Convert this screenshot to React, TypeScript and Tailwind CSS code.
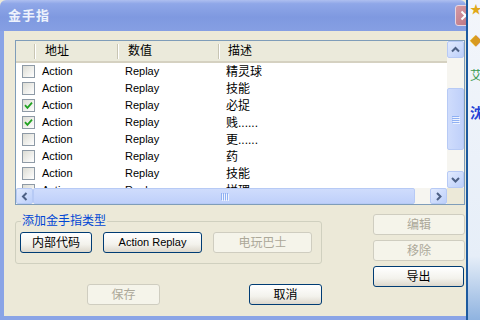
import clsx from "clsx";

type Row = { on: boolean; desc: string };

const rows: Row[] = [
  { on: false, desc: "精灵球" },
  { on: false, desc: "技能" },
  { on: true, desc: "必捉" },
  { on: true, desc: "贱......" },
  { on: false, desc: "更......" },
  { on: false, desc: "药" },
  { on: false, desc: "技能" },
  { on: false, desc: "拼理" },
];

function Check({ on }: { on: boolean }) {
  return (
    <span className="flex h-[13px] w-[13px] shrink-0 items-center justify-center border border-[#8e9aa6] bg-[linear-gradient(135deg,#dcdcd4,#ffffff)]">
      {on && (
        <svg width="9" height="9" viewBox="0 0 9 9">
          <path d="M1 4.2 L3.4 6.8 L8 1.6" fill="none" stroke="#21a121" strokeWidth="1.8" />
        </svg>
      )}
    </span>
  );
}

function XpButton({ label, disabled, className }: { label: string; disabled?: boolean; className?: string }) {
  return (
    <div
      className={clsx(
        "flex h-[21px] shrink-0 items-center justify-center rounded-[3px] border",
        disabled
          ? "border-[#cfcdc0] bg-[#f5f4ea] text-[#aca899]"
          : "border-[#003c74] bg-[linear-gradient(to_bottom,#ffffff,#f3f2ec_60%,#dcd7cc)] text-black",
        className,
      )}
    >
      {label}
    </div>
  );
}

/** XP Luna scroll arrow; dir picks the chevron. */
function Arrow({ dir, className }: { dir: "up" | "down" | "left" | "right"; className?: string }) {
  const d = {
    up: "M4 9.5 L7.5 6 L11 9.5",
    down: "M4 6 L7.5 9.5 L11 6",
    left: "M9.5 4 L6 7.5 L9.5 11",
    right: "M6 4 L9.5 7.5 L6 11",
  }[dir];
  return (
    <div
      className={clsx(
        "flex shrink-0 items-center justify-center rounded-[2px] border border-[#b7caf5] bg-[linear-gradient(135deg,#e2ebfe,#bccffa)]",
        className,
      )}
    >
      <svg width="15" height="15" viewBox="0 0 15 15">
        <path d={d} fill="none" stroke="#4d6185" strokeWidth="2" />
      </svg>
    </div>
  );
}

function Grip({ vertical }: { vertical?: boolean }) {
  return (
    <div className={clsx("flex gap-px", vertical ? "flex-col" : "flex-row")}>
      {[0, 1, 2, 3].map((i) => (
        <span
          key={i}
          className={clsx(
            vertical ? "h-px w-[7px]" : "h-[7px] w-px",
            "bg-[#8fb0f3] shadow-[1px_1px_0_#eef3fe]",
          )}
        />
      ))}
    </div>
  );
}

function HeadCell({ label, className, sep = true }: { label?: string; className?: string; sep?: boolean }) {
  return (
    <div className={clsx("flex h-full items-center justify-between", className)}>
      <span>{label}</span>
      {sep && <span className="h-[15px] w-px bg-[#c8c5b3] shadow-[1px_0_0_#ffffff]" />}
    </div>
  );
}

export default function App() {
  return (
    <div className="flex h-[320px] w-[480px] overflow-hidden bg-[#ece9d8] font-['Liberation_Sans','Noto_Sans_CJK_SC',sans-serif] text-[11px] text-black">
      {/* dialog, cut off on the right by another window */}
      <div className="flex h-full w-[466px] shrink-0 flex-col overflow-hidden">
        {/* title bar */}
        <div className="flex h-[31px] shrink-0 items-center rounded-t-[6px] bg-[linear-gradient(to_bottom,#aebff0_0%,#8fa7e8_12%,#7f99e0_55%,#869fe3_100%)] pl-[8px]">
          <span className="text-[13px] font-bold tracking-[1px] text-[#edf2fc]">金手指</span>
          <div className="ml-auto mr-[-10px] flex h-[21px] w-[21px] items-center justify-center rounded-[3px] border border-[#e8d6e0] bg-[linear-gradient(135deg,#d59aa4,#b8707e)]">
            <svg width="11" height="11" viewBox="0 0 11 11">
              <path d="M1.5 1.5 L9.5 9.5 M9.5 1.5 L1.5 9.5" stroke="#ffffff" strokeWidth="2" />
            </svg>
          </div>
        </div>

        {/* body */}
        <div className="flex flex-1 flex-col border-b-4 border-l-4 border-[#8aa4e6] pl-[11px] pt-[9px]">
          {/* list view */}
          <div className="flex h-[165px] w-[450px] shrink-0 flex-col border border-[#7f9db9] bg-white">
            <div className="flex h-[147px]">
              <div className="w-[431px] overflow-hidden">
                <div className="flex h-[22px] border-b-2 border-[#d5d1c1] bg-[#ebeadb] text-[12px]">
                  <HeadCell className="w-[19px]" />
                  <HeadCell label="地址" className="w-[83px] pl-[10px]" />
                  <HeadCell label="数值" className="w-[101px] pl-[10px]" />
                  <HeadCell label="描述" className="flex-1 pl-[9px]" sep={false} />
                </div>
                {rows.map((r, i) => (
                  <div key={i} className="flex h-[17px] items-center">
                    <div className="flex w-[102px] items-center pl-[6px]">
                      <Check on={r.on} />
                      <span className="ml-[7px]">Action</span>
                    </div>
                    <div className="w-[101px] pl-[7px]">Replay</div>
                    <div className="pl-[7px] text-[12px]">{r.desc}</div>
                  </div>
                ))}
              </div>
              {/* vertical scrollbar */}
              <div className="flex w-[17px] flex-col bg-[#f6f5f0]">
                <Arrow dir="up" className="h-[17px]" />
                <div className="h-[30px]" />
                <div className="flex h-[62px] items-center justify-center rounded-[2px] border border-[#b7caf5] bg-[linear-gradient(to_right,#cfdcfc,#bfd0fa)]">
                  <Grip vertical />
                </div>
                <div className="flex-1" />
                <Arrow dir="down" className="h-[17px]" />
              </div>
            </div>
            {/* horizontal scrollbar */}
            <div className="flex h-[16px]">
              <div className="flex w-[431px] bg-[#f6f5f0]">
                <Arrow dir="left" className="w-[17px]" />
                <div className="flex w-[382px] items-center justify-center rounded-[2px] border border-[#b7caf5] bg-[linear-gradient(to_bottom,#cfdcfc,#bfd0fa)]">
                  <Grip />
                </div>
                <div className="flex-1" />
                <Arrow dir="right" className="w-[17px]" />
              </div>
              <div className="w-[17px] bg-[#ece9d8]" />
            </div>
          </div>

          {/* lower controls */}
          <div className="flex text-[12px]">
            <div className="flex w-[307px] flex-col">
              <div className="mt-[16px] flex h-[43px] flex-col rounded-[3px] border border-[#d0d0bf]">
                <span className="ml-[5px] mt-[-8px] w-fit bg-[#ece9d8] px-px leading-[14px] text-[#0046d5]">添加金手指类型</span>
                <div className="mt-[4px] flex gap-[11px] pl-[4px]">
                  <XpButton label="内部代码" className="w-[72px]" />
                  <XpButton label="Action Replay" className="w-[99px] text-[11px]" />
                  <XpButton label="电玩巴士" disabled className="w-[99px]" />
                </div>
              </div>
              <div className="mt-[20px] flex">
                <XpButton label="保存" disabled className="ml-[72px] w-[73px]" />
                <XpButton label="取消" className="ml-[89px] w-[73px]" />
              </div>
            </div>
            <div className="ml-[51px] mt-[9px] flex flex-col gap-[5px]">
              <XpButton label="编辑" disabled className="w-[92px]" />
              <XpButton label="移除" disabled className="w-[92px]" />
              <XpButton label="导出" className="w-[91px]" />
            </div>
          </div>
        </div>
      </div>

      {/* window behind, peeking out on the right */}
      <div className="flex h-full w-[14px] shrink-0 flex-col overflow-hidden border-l-2 border-[#1d5a9e] bg-[linear-gradient(to_bottom,#f3f6fb,#e6eef8_80%,#8fb3e0)] pl-[2px]">
        <span className="mt-[3px] text-[12px] leading-[14px] text-[#e0a818]">★</span>
        <span className="mt-[18px] text-[12px] leading-[14px] text-[#d89a20]">◆</span>
        <span className="mt-[20px] whitespace-nowrap text-[12px] leading-[14px] text-[#3c9a54]">艾</span>
        <span className="mt-[22px] whitespace-nowrap text-[14px] font-bold leading-[16px] text-[#2442d6]">沈</span>
      </div>
    </div>
  );
}
